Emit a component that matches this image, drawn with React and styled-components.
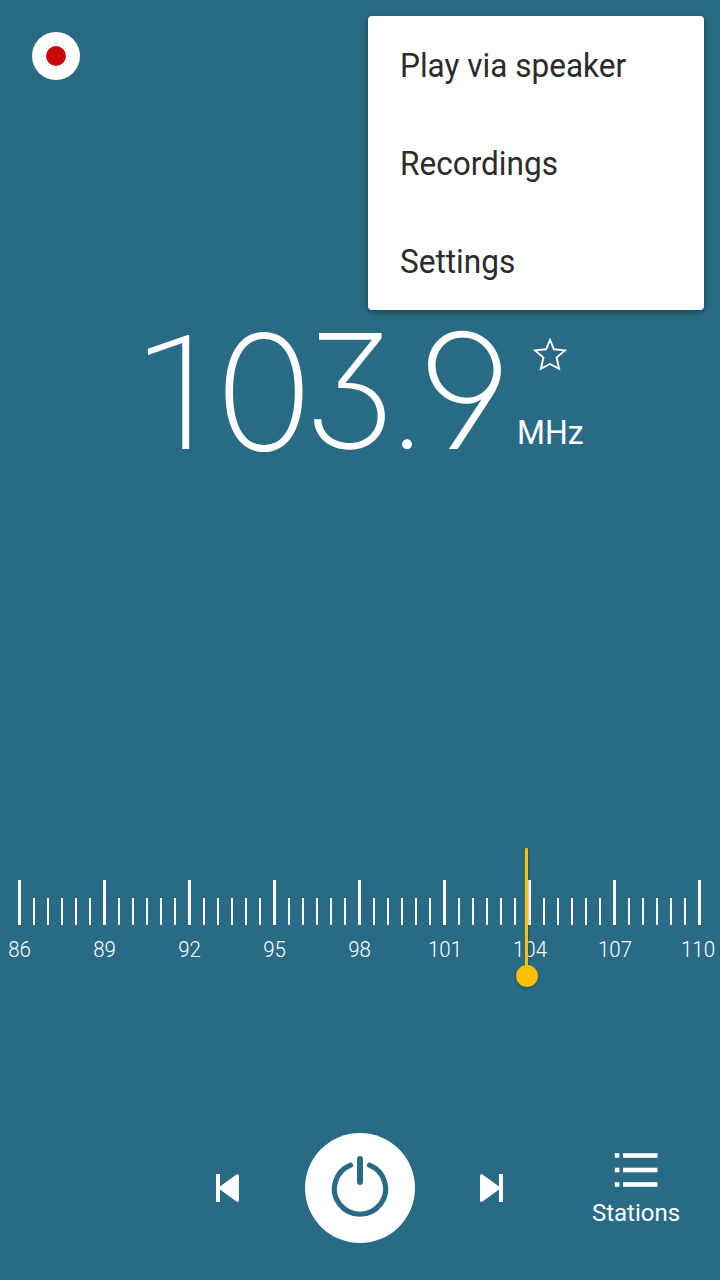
import React from "react";
import styled, { createGlobalStyle } from "styled-components";

const BLUE = "#296b85";
const YELLOW = "#ffc000";

const menuItems = ["Play via speaker", "Recordings", "Settings"];

const marks = [86, 89, 92, 95, 98, 101, 104, 107, 110];

const digits = [
  { char: "1", left: 152, width: 56, family: "Roboto", transform: "scale(1.09, 1.01)" },
  { char: "0", left: 222, width: 84, family: "Lato", weight: 300, transform: "scale(0.96, 1.05)" },
  { char: "3", left: 307, width: 84, transform: "scale(0.985, 1)" },
  { char: ".", left: 397, width: 20, size: 125 },
  { char: "9", left: 424, width: 84, transform: "scale(1.06, 1.015) skewX(3.5deg)" },
];

export default function App() {
  return (
    <Screen>
      <GlobalStyle />
      <TopBar>
        <RecordButton aria-label="Record">
          <RecordDot />
        </RecordButton>
      </TopBar>

      <Readout>
        <Frequency>
          {digits.map((d, i) => (
            <Digit
              key={i}
              $width={d.width}
              $gap={i ? d.left - digits[i - 1].left - digits[i - 1].width : 0}
              $family={d.family}
              $weight={d.weight}
              $size={d.size}
              $transform={d.transform}
            >
              {d.char}
            </Digit>
          ))}
        </Frequency>
        <Side>
          <StarIcon />
          <Unit>MHz</Unit>
        </Side>
      </Readout>

      <Dial>
        <Ticks>
          {marks.map((mark, i) => (
            <React.Fragment key={mark}>
              <Tick $major />
              {i < marks.length - 1 &&
                [1, 2, 3, 4, 5].map((n) => <Tick key={n} />)}
            </React.Fragment>
          ))}
        </Ticks>
        <Labels>
          {marks.map((mark) => (
            <Label key={mark} $wide={mark > 99} $last={mark === 110}>
              {mark}
            </Label>
          ))}
        </Labels>
        <Needle>
          <NeedleLine />
          <NeedleKnob />
        </Needle>
      </Dial>

      <Controls>
        <SkipButton aria-label="Previous">
          <SkipIcon />
        </SkipButton>
        <PowerButton aria-label="Power">
          <PowerIcon />
        </PowerButton>
        <SkipButton aria-label="Next">
          <SkipIcon next />
        </SkipButton>
        <StationsButton>
          <ListIcon />
          <span>Stations</span>
        </StationsButton>
      </Controls>

      <Menu>
        {menuItems.map((item) => (
          <MenuItem key={item}>
            <span>{item}</span>
          </MenuItem>
        ))}
      </Menu>
    </Screen>
  );
}

const StarIcon = () => (
  <svg width="36" height="38" viewBox="0 0 36 38" fill="none">
    <path
      d="M18 4.9 L21.9 14.3 L32.9 15.4 L24.6 22.6 L27.1 33.8 L18 29 L8.9 33.8 L11.4 22.6 L3.1 15.4 L14.1 14.3 Z"
      stroke="#fff"
      strokeWidth="1.9"
    />
  </svg>
);

const SkipIcon = ({ next }) => (
  <svg width="24" height="28" viewBox="0 0 24 28" fill="#fff">
    <g transform={next ? "translate(24 0) scale(-1 1)" : undefined}>
      <path d="M1 0h4v28h-4z" />
      <path d="M4 13.2 L21.4 0.5 Q24 -0.6 24 1.8 V26.2 Q24 28.6 21.4 27.5 L4 14.8 Z" />
    </g>
  </svg>
);

const PowerIcon = () => (
  <svg width="60" height="64" viewBox="0 0 60 64" fill="none">
    <g stroke={BLUE} strokeLinecap="round">
      <path d="M20.6 9.2 A25.6 25.4 0 1 0 39.4 9.2" strokeWidth="5.2" />
      <path d="M30 3 V26" strokeWidth="6" />
    </g>
  </svg>
);

const ListIcon = () => (
  <svg width="44" height="36" viewBox="0 0 44 36" fill="#fff">
    {[0, 14.5, 29].map((y) => (
      <g key={y}>
        <rect x="0.8" y={y + 1.2} width="4.6" height="4.6" />
        <rect x="9" y={y + 1.2} width="34.5" height="4.6" />
      </g>
    ))}
  </svg>
);

const GlobalStyle = createGlobalStyle`
  body {
    margin: 0;
    background: ${BLUE};
    font-family: Roboto, sans-serif;
  }

  button {
    margin: 0;
    padding: 0;
    border: none;
    background: none;
    color: inherit;
    font: inherit;
  }

  svg {
    display: block;
  }
`;

const Screen = styled.div`
  position: relative;
  display: flex;
  flex-direction: column;
  box-sizing: border-box;
  width: 720px;
  height: 1280px;
  overflow: hidden;
  background: ${BLUE};
  color: #fff;
`;

const TopBar = styled.header`
  height: 275px;
  padding: 32px 32px 0;
  box-sizing: border-box;
`;

const RecordButton = styled.button`
  display: grid;
  place-items: center;
  width: 48px;
  height: 48px;
  border-radius: 50%;
  background: #fff;
`;

const RecordDot = styled.span`
  width: 20px;
  height: 20px;
  border-radius: 50%;
  background: #cd0a0a;
`;

const Readout = styled.section`
  display: flex;
  height: 573px;
  padding-left: 152px;
  box-sizing: border-box;
`;

const Frequency = styled.div`
  display: flex;
  align-items: baseline;
  width: 365px;
  height: 224px;
  line-height: 224px;
`;

const Digit = styled.span`
  display: flex;
  flex: none;
  justify-content: center;
  width: ${(p) => p.$width}px;
  margin-left: ${(p) => p.$gap}px;
  font-family: ${(p) => p.$family || "Inter"}, sans-serif;
  font-size: ${(p) => p.$size || 158}px;
  font-weight: ${(p) => p.$weight || 200};
  font-feature-settings: "ss01", "cv09";
  transform: ${(p) => p.$transform || "none"};
`;

const Side = styled.div`
  display: flex;
  flex-direction: column;
  padding-top: 60px;

  svg {
    margin-left: 15px;
  }
`;

const Unit = styled.span`
  margin-top: 40px;
  font-size: 33px;
  line-height: 40px;
  transform: scaleX(0.97);
  transform-origin: left;
`;

const Dial = styled.section`
  position: relative;
  height: 285px;
  padding: 32px 0 0 18px;
  box-sizing: border-box;
`;

const Ticks = styled.div`
  display: flex;
  align-items: flex-end;
  gap: 12px;
  height: 45px;
`;

const Tick = styled.i`
  flex: none;
  width: ${(p) => (p.$major ? 3 : 2)}px;
  height: ${(p) => (p.$major ? 45 : 27)}px;
  background: #fff;
`;

const Labels = styled.div`
  display: flex;
  margin: 12px 0 0 -41px;
  font-size: 22px;
  font-weight: 300;
  line-height: 26px;
`;

const Label = styled.span`
  flex: none;
  width: 85px;
  margin-left: ${(p) => (p.$last ? -2 : 0)}px;
  padding-left: ${(p) => (p.$wide ? 1 : 0)}px;
  box-sizing: border-box;
  text-align: center;
  transform: scaleX(0.93);
`;

// sits over the scale at the tuned frequency
const Needle = styled.div`
  position: absolute;
  left: 516px;
  top: 0;
  display: flex;
  flex-direction: column;
  width: 22px;
`;

const NeedleLine = styled.span`
  width: 3px;
  height: 119px;
  margin: 0 0 -2px 9px;
  border-radius: 1px 1px 0 0;
  background: ${YELLOW};
  box-shadow: 1px 1px 2px rgba(0, 0, 0, 0.25);
`;

const NeedleKnob = styled.span`
  width: 22px;
  height: 22px;
  border-radius: 50%;
  background: ${YELLOW};
  box-shadow: 0 1px 3px rgba(0, 0, 0, 0.3);
`;

const Controls = styled.footer`
  display: flex;
  align-items: center;
  height: 110px;
  padding-left: 215px;
`;

const SkipButton = styled.button`
  width: 24px;
  height: 28px;
`;

const PowerButton = styled.button`
  display: grid;
  place-items: center;
  width: 110px;
  height: 110px;
  margin: 0 65px 0 66px;
  border-radius: 50%;
  background: #fff;
`;

const StationsButton = styled.button`
  display: flex;
  flex-direction: column;
  align-items: center;
  width: 100px;
  margin: 2px 0 0 82px;
  font-size: 24px;
  line-height: 28px;

  span {
    margin-top: 11px;
  }
`;

const Menu = styled.div`
  position: absolute;
  top: 16px;
  left: 368px;
  width: 336px;
  height: 294px;
  border-radius: 4px;
  background: #fff;
  box-shadow: 0 2px 6px rgba(0, 0, 0, 0.4);
`;

const MenuItem = styled.div`
  display: flex;
  align-items: center;
  height: 98px;
  padding: 1px 32px 0;
  box-sizing: border-box;
  color: #2b2b2b;
  font-size: 33px;
  white-space: nowrap;

  span {
    transform: scaleX(0.956);
    transform-origin: left;
  }
`;
